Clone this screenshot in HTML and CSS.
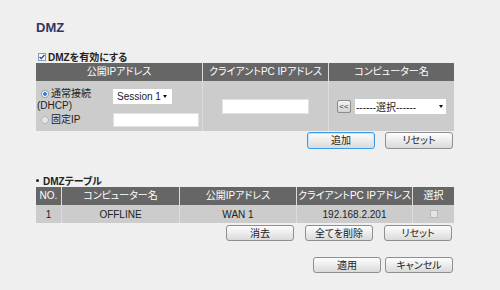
FILE: index.html
```html
<!DOCTYPE html>
<html lang="ja">
<head>
  <meta charset="UTF-8">
  <meta name="viewport" content="width=device-width, initial-scale=1.0">
  <title>DMZ</title>
  <link rel="stylesheet" href="styles.css">
</head>
<body>
  <div id="dmz">
    <h1 class="dmz_title">DMZ</h1>
    <label class="dmz_enable">
      <svg class="chk" width="8" height="8" viewBox="0 0 8 8">
        <rect x="0.5" y="0.5" width="7" height="7" fill="#f4f7fb" stroke="#7f9db9"/>
        <path d="M1.6 3.9 L3.2 5.6 L6.4 2" fill="none" stroke="#2c3f7a" stroke-width="1.3"/>
      </svg>
      DMZを有効にする
    </label>

    <div class="dmz_form">
      <div class="form_th">公開IPアドレス</div>
      <div class="form_th col_line">クライアントPC IPアドレス</div>
      <div class="form_th col_line">コンピューター名</div>

      <div class="form_td form_wan">
        <div class="wan_row">
          <label class="wan_lbl"><span class="radio radio_on"></span>通常接続<br>(DHCP)</label>
          <div class="sel sel_session">Session 1<span class="sel_arrow"></span></div>
        </div>
        <div class="wan_row wan_row2">
          <label class="wan_lbl"><span class="radio"></span>固定IP</label>
          <input class="ipt ipt_wan" type="text">
        </div>
      </div>
      <div class="form_td form_center col_line">
        <input class="ipt ipt_client" type="text">
      </div>
      <div class="form_td form_center col_line">
        <a class="small_btn" href="javascript:;">&lt;&lt;</a>
        <div class="sel sel_pc">------選択------<span class="sel_arrow"></span></div>
      </div>
    </div>

    <div class="btn_row">
      <button class="btn btn_focus">追加</button>
      <button class="btn">リセット</button>
    </div>

    <div class="list_title"><span class="dot"></span>DMZテーブル</div>
    <div class="dmz_list">
      <div class="list_th">NO.</div>
      <div class="list_th col_line">コンピューター名</div>
      <div class="list_th col_line">公開IPアドレス</div>
      <div class="list_th col_line">クライアントPC IPアドレス</div>
      <div class="list_th col_line">選択</div>
      <div class="list_td">1</div>
      <div class="list_td col_line">OFFLINE</div>
      <div class="list_td col_line">WAN 1</div>
      <div class="list_td col_line">192.168.2.201</div>
      <div class="list_td col_line"><span class="chk_off"></span></div>
    </div>

    <div class="btn_row btn_row_list">
      <button class="btn btn_low">消去</button>
      <button class="btn btn_low">全てを削除</button>
      <button class="btn btn_low">リセット</button>
    </div>

    <div class="btn_row btn_row_apply">
      <button class="btn btn_low">適用</button>
      <button class="btn btn_low">キャンセル</button>
    </div>
  </div>
</body>
</html>
```

FILE: styles.css
```css
body {
  margin: 0;
  background-color: #efefef;
  font-family: "Liberation Sans", "Noto Sans CJK JP", sans-serif;
  font-size: 10px;
  color: #222;
  font-feature-settings: "palt";
}
#dmz {
  width: 418px;
  padding: 21px 0 0 36px;
}
.dmz_title {
  margin: 0;
  font-size: 13px;
  line-height: 13px;
  font-weight: bold;
  color: #333366;
}
.dmz_enable {
  display: flex;
  align-items: center;
  height: 13px;
  margin-top: 16px;
  font-weight: bold;
}
.chk {
  margin: 0 2px 0 2px;
}

/* 上のフォーム */
.dmz_form {
  display: grid;
  grid-template-columns: 166px 126px 126px;
}
.form_th,
.list_th {
  height: 18px;
  line-height: 18px;
  background-color: #666;
  color: #fff;
  text-align: center;
  white-space: nowrap;
}
.col_line {
  border-left: 1px solid #dcdcdc;
}
.form_td {
  height: 50px;
  box-sizing: border-box;
  background-color: #ccc;
}
.form_wan {
  padding: 7px 0 0 1px;
}
.form_center {
  display: flex;
  align-items: center;
  justify-content: center;
  gap: 4px;
}
.wan_row {
  display: flex;
  align-items: flex-start;
}
.wan_row2 {
  margin-top: 1px;
  align-items: center;
}
.wan_lbl {
  width: 76px;
  line-height: 12px;
}
.wan_row2 .wan_lbl {
  line-height: 14px;
}
.radio {
  display: inline-block;
  width: 6px;
  height: 6px;
  margin: 0 2px 0 4px;
  border: 1px solid #b4b4b4;
  border-radius: 50%;
  background-color: #e6e6e6;
  vertical-align: -1px;
}
.radio.radio_on {
  border-color: #9a9a9a;
  background: radial-gradient(circle, #1f6fc8 0, #3a8de0 1.6px, #fff 2.2px);
}
.sel {
  display: flex;
  align-items: center;
  justify-content: space-between;
  box-sizing: border-box;
  height: 15px;
  background-color: #fff;
  white-space: nowrap;
}
.sel_session {
  width: 59px;
  margin-top: 1px;
  padding: 0 5px 0 4px;
}
.sel_pc {
  width: 91px;
  padding: 0 3px 0 1px;
}
.sel_arrow {
  width: 0;
  height: 0;
  border-left: 2.5px solid transparent;
  border-right: 2.5px solid transparent;
  border-top: 3px solid #111;
}
.ipt {
  display: block;
  box-sizing: border-box;
  margin: 0;
  padding: 0;
  border: 1px solid #e2e2e2;
  background-color: #fff;
}
.ipt_wan {
  width: 86px;
  height: 14px;
}
.ipt_client {
  width: 87px;
  height: 15px;
}
.small_btn {
  box-sizing: border-box;
  width: 14px;
  height: 13px;
  border: 1px solid #8a8a8a;
  border-radius: 2px;
  background: linear-gradient(#f4f4f4, #d2d2d2);
  font-size: 8px;
  line-height: 11px;
  text-align: center;
  color: #333;
  text-decoration: none;
}

/* ボタン */
.btn_row {
  display: flex;
  justify-content: flex-end;
  gap: 10px;
  margin-top: 1px;
  padding-right: 1px;
}
.btn {
  width: 68px;
  height: 17px;
  box-sizing: border-box;
  padding: 0;
  border: 1px solid #8f8f8f;
  border-radius: 3px;
  background: linear-gradient(#fdfdfd, #ececec 50%, #dadada);
  font: inherit;
  line-height: 14px;
  color: #222;
  text-align: center;
}
.btn.btn_focus {
  border-color: #3c9ae6;
  box-shadow: inset 0 0 0 1px #c4e4fa;
}
.btn.btn_low {
  height: 16px;
  line-height: 13px;
}
.btn_row_list {
  gap: 11px;
  margin-top: 2px;
  padding-right: 2px;
}
.btn_row_apply {
  gap: 4px;
  margin-top: 16px;
}

/* テーブル */
.list_title {
  display: flex;
  align-items: center;
  height: 13px;
  margin-top: 25px;
  font-weight: bold;
}
.dot {
  width: 3px;
  height: 3px;
  margin-right: 4px;
  border-radius: 50%;
  background-color: #222;
}
.dmz_list {
  display: grid;
  grid-template-columns: 25px 118px 117px 116px 42px;
}
.list_td {
  display: flex;
  align-items: center;
  justify-content: center;
  height: 18px;
  background-color: #ccc;
}
.chk_off {
  width: 6px;
  height: 6px;
  border: 1px solid #b8b8b8;
  background-color: #e4e4e4;
}
```
